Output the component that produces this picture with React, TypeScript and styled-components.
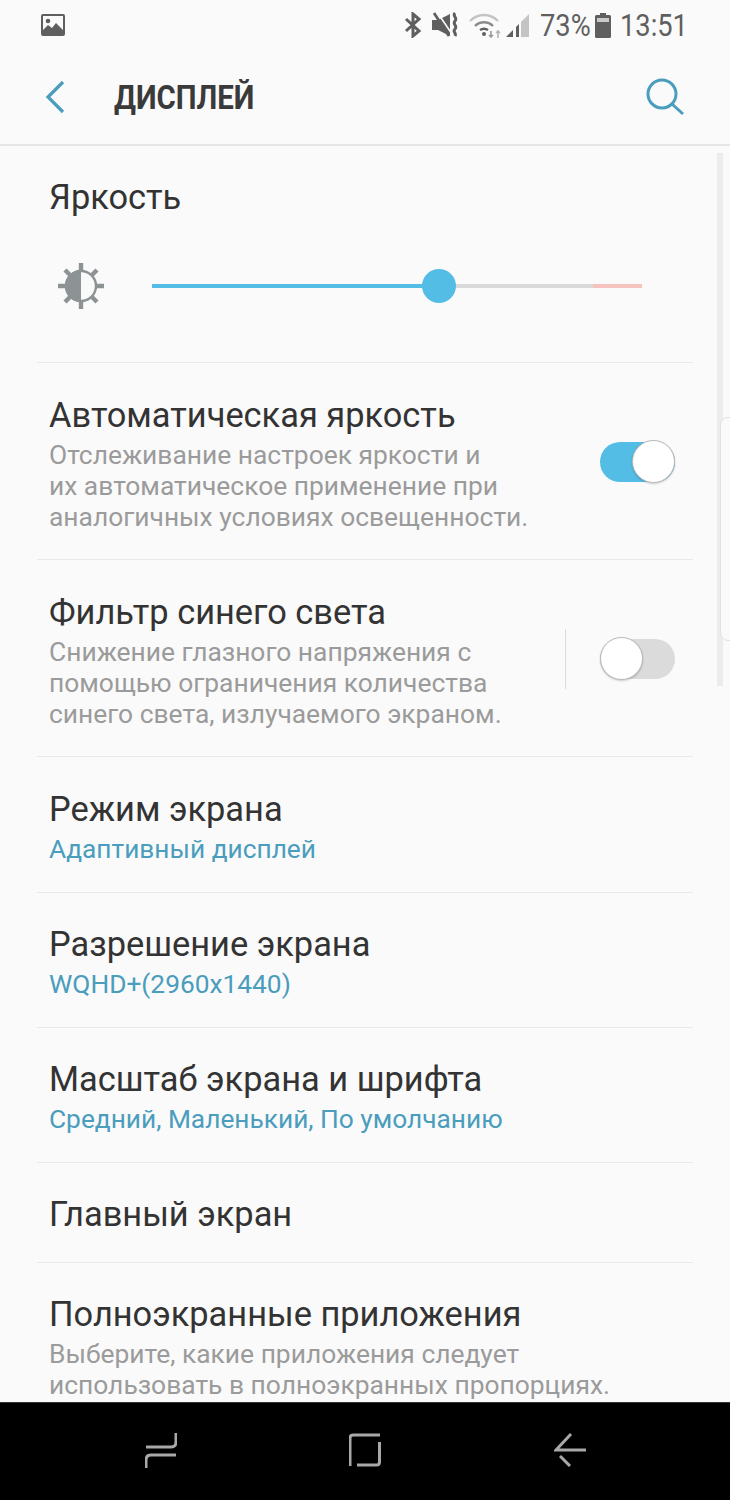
import styled, { createGlobalStyle } from 'styled-components'

const GlobalStyle = createGlobalStyle`
    html, body {
        margin: 0;
        padding: 0;
        background: #fafafa;
    }
    * {
        box-sizing: border-box;
    }
`
const Screen = styled.div`
    position: relative;
    width: 730px;
    height: 1500px;
    display: flex;
    flex-direction: column;
    overflow: hidden;
    background: #fafafa;
    font-family: Roboto, 'Noto Sans', sans-serif;
`
const StatusBar = styled.div`
    height: 50px;
    flex: none;
    display: flex;
    align-items: center;
    justify-content: space-between;
    padding: 0 44px 0 40px;
    color: #5f5f5f;
`
const StatusIcons = styled.div`
    display: flex;
    align-items: center;
`
const StatusSlot = styled.div<{ $left: number }>`
    display: flex;
    margin-left: ${(props) => props.$left}px;
`
const StatusText = styled.span<{ $width: number; $left: number }>`
    display: inline-block;
    width: ${(props) => props.$width}px;
    margin-left: ${(props) => props.$left}px;
    padding-top: 2px;
    font-size: 31px;
    line-height: 48px;
    white-space: nowrap;
    color: #5f5f5f;
    transform: scaleX(0.88);
    transform-origin: left center;
`
const Header = styled.header`
    height: 96px;
    flex: none;
    display: flex;
    align-items: center;
    justify-content: space-between;
    padding: 0 46px 0 45px;
    border-bottom: 2px solid #e6e6e6;
`
const HeaderLeft = styled.div`
    display: flex;
    align-items: center;
    gap: 47px;
`
const Title = styled.h1`
    margin: 0;
    font-size: 34px;
    font-weight: 700;
    color: #3a3a3a;
    transform: scaleX(0.865);
    transform-origin: left center;
`
const List = styled.main`
    flex: 1;
    min-height: 0;
    overflow: hidden;
    padding: 0 37px;
`
const Row = styled.section<{ $height: number; $stacked?: boolean }>`
    height: ${(props) => props.$height}px;
    display: ${(props) => (props.$stacked ? 'block' : 'flex')};
    align-items: flex-start;
    justify-content: space-between;
    padding: 0 12px;
    border-bottom: 1px solid #e9e9e9;
`
const RowText = styled.div<{ $top: number }>`
    padding-top: ${(props) => props.$top}px;
`
const RowTitle = styled.div`
    font-size: 34.4px;
    line-height: 38px;
    color: #333333;
`
const RowSub = styled.div`
    margin-top: 6px;
    font-size: 26.4px;
    line-height: 31px;
    color: #9b9b9b;
    white-space: pre-line;
`
const RowValue = styled.div`
    margin-top: 6px;
    font-size: 26.3px;
    line-height: 31px;
    color: #4a9dbd;
`
const BrightnessRow = styled.div`
    display: flex;
    align-items: center;
    padding: 47px 39px 0 9px;
`
const Slider = styled.div`
    position: relative;
    flex: 1;
    height: 4px;
    margin-left: 48px;
    background: #d9d9d9;
`
const SliderFill = styled.div`
    height: 100%;
    background: #54bde6;
`
const SliderWarn = styled.div`
    position: absolute;
    top: 0;
    right: 0;
    width: 49px;
    height: 100%;
    background: #f6c3bf;
`
const SliderThumb = styled.div`
    position: absolute;
    top: -15px;
    width: 34px;
    height: 34px;
    margin-left: -17px;
    border-radius: 50%;
    background: #54bde6;
`
const SwitchArea = styled.div<{ $divider?: boolean }>`
    display: flex;
    align-items: center;
    height: 60px;
    margin-top: 69px;
    margin-right: 6px;
    ${(props) => props.$divider && 'border-left: 1px solid #dcdcdc; padding-left: 34px;'}
`
const Track = styled.div<{ $on: boolean }>`
    position: relative;
    width: 75px;
    height: 40px;
    border-radius: 20px;
    background: ${(props) => (props.$on ? '#54bde6' : '#dbdbdb')};
`
const Knob = styled.div<{ $on: boolean }>`
    position: absolute;
    top: -2px;
    ${(props) => (props.$on ? 'right: 0;' : 'left: 0;')}
    width: 43px;
    height: 43px;
    border-radius: 50%;
    background: #ffffff;
    border: 1px solid #b8b8b8;
    box-shadow: 0 1px 2px rgba(0, 0, 0, 0.2);
`
const Scrollbar = styled.div`
    position: absolute;
    top: 153px;
    left: 717px;
    width: 6px;
    height: 533px;
    background: #ececec;
`
const EdgeHandle = styled.div`
    position: absolute;
    top: 417px;
    left: 720px;
    width: 14px;
    height: 224px;
    border: 1px solid #e2e2e2;
    border-radius: 8px 0 0 8px;
    background: #fafafa;
`
const NavBar = styled.nav`
    height: 98px;
    flex: none;
    display: flex;
    align-items: center;
    justify-content: space-between;
    padding: 0 144px 4px 145px;
    background: #000000;
    border-top: 1px solid #333333;
`

const GalleryIcon = () => (
    <svg width="26" height="24" viewBox="0 0 26 24">
        <rect x="1" y="1" width="24" height="22" rx="2" fill="#5f5f5f" />
        <rect x="3" y="3" width="20" height="16" fill="#fafafa" />
        <circle cx="8" cy="8" r="2.3" fill="#5f5f5f" />
        <path d="M3 17l5-5 4 3 4-5 7 7v5H3z" fill="#5f5f5f" />
    </svg>
)
const BluetoothIcon = () => (
    <svg width="18" height="26" viewBox="0 0 18 26" fill="none" stroke="#5f5f5f" strokeWidth="3">
        <path d="M2 7l13 12-6 5V2l6 5L2 19" />
    </svg>
)
const MuteIcon = () => (
    <svg width="27" height="26" viewBox="0 0 27 26" fill="none">
        <path d="M0 8h6l12-6v22L6 18H0z" fill="#5f5f5f" />
        <path d="M5 0l15 22" stroke="#fafafa" strokeWidth="1.6" />
        <path d="M2 1l15 23" stroke="#5f5f5f" strokeWidth="2.8" />
        <path d="M23 1c-3 3 3 5 0 8s3 5 0 8 2 4 0 7" stroke="#5f5f5f" strokeWidth="3" />
    </svg>
)
const WifiIcon = () => (
    <svg width="34" height="26" viewBox="0 0 34 26" fill="none" strokeWidth="2.4">
        <path d="M1 9c8-8 20-8 28 0" stroke="#c4c4c4" />
        <path d="M6 14c5-5 13-5 18 0" stroke="#8a8a8a" />
        <path d="M11 18c3-2 5-2 8 0" stroke="#5f5f5f" />
        <circle cx="15" cy="22" r="2" fill="#5f5f5f" stroke="none" />
        <path d="M22 19v6M20 23l2 2 2-2" stroke="#9a9a9a" strokeWidth="1.6" />
        <path d="M29 26v-7M27 21l2-2 2 2" stroke="#b5b5b5" strokeWidth="1.6" />
    </svg>
)
const SignalIcon = () => (
    <svg width="24" height="26" viewBox="0 0 24 26">
        <path d="M15 10L23 2v23h-8z" fill="#c4c4c4" />
        <path d="M10 15l3-3v13h-3z" fill="#5f5f5f" />
        <path d="M0 25l7-7v7z" fill="#5f5f5f" />
    </svg>
)
const BatteryIcon = () => (
    <svg width="16" height="25" viewBox="0 0 16 25">
        <rect x="5" y="0" width="6" height="3" fill="#5f5f5f" />
        <rect x="0" y="2" width="16" height="23" rx="1.5" fill="#5f5f5f" />
        <rect x="2" y="5" width="12" height="4" fill="#c9c9c9" />
    </svg>
)
const BackIcon = () => (
    <svg width="22" height="34" viewBox="0 0 22 34" fill="none" stroke="#4a9dbd" strokeWidth="3.2">
        <path d="M18 2L3 17l15 15" />
    </svg>
)
const SearchIcon = () => (
    <svg width="38" height="38" viewBox="0 0 38 38" fill="none" stroke="#4a9dbd" strokeWidth="3">
        <circle cx="16" cy="16" r="14" />
        <path d="M26 26l11 10" />
    </svg>
)
const SunIcon = () => (
    <svg width="46" height="46" viewBox="0 0 46 46">
        <g stroke="#8d9295" strokeWidth="4.4">
            <path d="M23 0v46M0 23h46M7 7l32 32M39 7L7 39" />
        </g>
        <circle cx="23" cy="23" r="15" fill="#fafafa" stroke="#8d9295" strokeWidth="2.4" />
        <path d="M23 7a16 16 0 0 0 0 32z" fill="#8d9295" />
    </svg>
)
const RecentIcon = () => (
    <svg width="32" height="36" viewBox="0 0 32 36" fill="none" stroke="#a8a8a8" strokeWidth="3">
        <path d="M31 1v9q0 5-5 5H1" />
        <path d="M31 23H6q-5 0-5 5v8" />
    </svg>
)
const HomeIcon = () => (
    <svg width="34" height="34" viewBox="0 0 34 34" fill="none" stroke="#a8a8a8" strokeWidth="3">
        <path d="M1 33V5q0-3 3-3h27" />
        <path d="M30.5 9v20q0 3-3 3H8" />
    </svg>
)
const NavBackIcon = () => (
    <svg width="32" height="34" viewBox="0 0 32 34" fill="none" stroke="#a8a8a8" strokeWidth="3">
        <path d="M17 1L2 17h30" />
        <path d="M6 23l10 10" />
    </svg>
)

const brightness = 58.5

export default function App() {
    return (
        <Screen>
            <GlobalStyle />
            <StatusBar>
                <GalleryIcon />
                <StatusIcons>
                    <StatusSlot $left={0}><BluetoothIcon /></StatusSlot>
                    <StatusSlot $left={10}><MuteIcon /></StatusSlot>
                    <StatusSlot $left={10}><WifiIcon /></StatusSlot>
                    <StatusSlot $left={3}><SignalIcon /></StatusSlot>
                    <StatusText $width={48} $left={10}>73%</StatusText>
                    <StatusSlot $left={7}><BatteryIcon /></StatusSlot>
                    <StatusText $width={66} $left={9}>13:51</StatusText>
                </StatusIcons>
            </StatusBar>
            <Header>
                <HeaderLeft>
                    <BackIcon />
                    <Title>ДИСПЛЕЙ</Title>
                </HeaderLeft>
                <SearchIcon />
            </Header>
            <List>
                <Row $height={217} $stacked>
                    <RowText $top={32}>
                        <RowTitle>Яркость</RowTitle>
                    </RowText>
                    <BrightnessRow>
                        <SunIcon />
                        <Slider>
                            <SliderFill style={{ width: `${brightness}%` }} />
                            <SliderWarn />
                            <SliderThumb style={{ left: `${brightness}%` }} />
                        </Slider>
                    </BrightnessRow>
                </Row>
                <Row $height={197}>
                    <RowText $top={33}>
                        <RowTitle>Автоматическая яркость</RowTitle>
                        <RowSub>{'Отслеживание настроек яркости и\nих автоматическое применение при\nаналогичных условиях освещенности.'}</RowSub>
                    </RowText>
                    <SwitchArea>
                        <Track $on>
                            <Knob $on />
                        </Track>
                    </SwitchArea>
                </Row>
                <Row $height={197}>
                    <RowText $top={33}>
                        <RowTitle>Фильтр синего света</RowTitle>
                        <RowSub>{'Снижение глазного напряжения с\nпомощью ограничения количества\nсинего света, излучаемого экраном.'}</RowSub>
                    </RowText>
                    <SwitchArea $divider>
                        <Track $on={false}>
                            <Knob $on={false} />
                        </Track>
                    </SwitchArea>
                </Row>
                <Row $height={136}>
                    <RowText $top={33}>
                        <RowTitle>Режим экрана</RowTitle>
                        <RowValue>Адаптивный дисплей</RowValue>
                    </RowText>
                </Row>
                <Row $height={135}>
                    <RowText $top={32}>
                        <RowTitle>Разрешение экрана</RowTitle>
                        <RowValue>WQHD+(2960x1440)</RowValue>
                    </RowText>
                </Row>
                <Row $height={135}>
                    <RowText $top={32}>
                        <RowTitle>Масштаб экрана и шрифта</RowTitle>
                        <RowValue>Средний, Маленький, По умолчанию</RowValue>
                    </RowText>
                </Row>
                <Row $height={100}>
                    <RowText $top={32}>
                        <RowTitle>Главный экран</RowTitle>
                    </RowText>
                </Row>
                <Row $height={140}>
                    <RowText $top={32}>
                        <RowTitle>Полноэкранные приложения</RowTitle>
                        <RowSub>{'Выберите, какие приложения следует\nиспользовать в полноэкранных пропорциях.'}</RowSub>
                    </RowText>
                </Row>
            </List>
            <NavBar>
                <RecentIcon />
                <HomeIcon />
                <NavBackIcon />
            </NavBar>
            <Scrollbar />
            <EdgeHandle />
        </Screen>
    )
}
